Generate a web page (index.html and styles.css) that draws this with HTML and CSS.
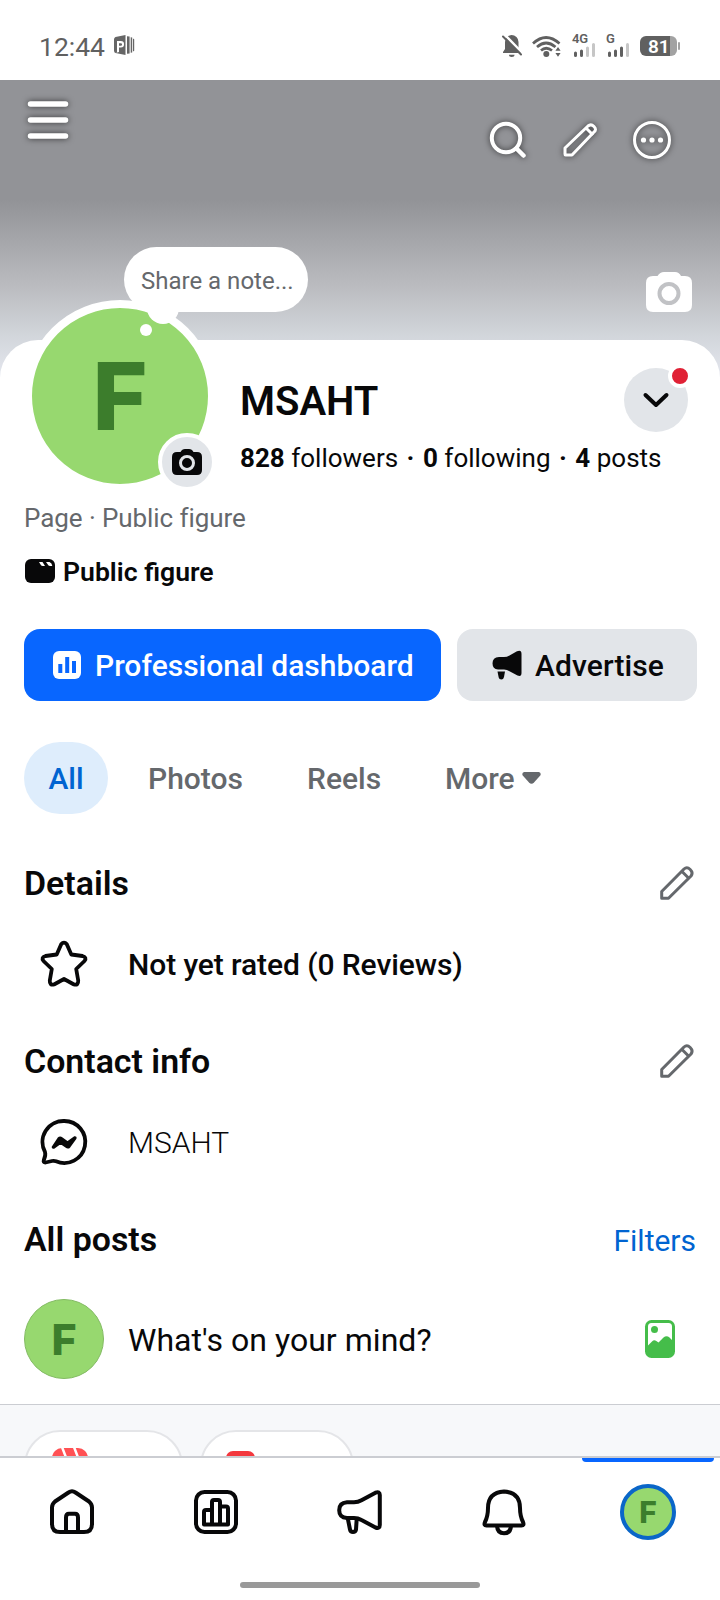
FILE: index.html
```html
<!DOCTYPE html>
<html lang="en">
<head>
<meta charset="utf-8">
<title>MSAHT</title>
<link rel="stylesheet" href="styles.css">
</head>
<body>
<header class="status">
  <span class="clock">12:44</span>
  <svg class="ppt" width="22" height="22" viewBox="0 0 22 22"><path fill="#666" fill-rule="evenodd" d="M2.500 2L12.500 0V20L2.500 18H4L4 6H7.800a3.200 3.200 0 1 1 0 6.500H6V17L2.500 18Q1 17.500 1 15.500V4.500Q1 2.500 2.500 2ZM6 8.300V10.800H7.800a1.200 1.200 0 0 0 0-2.500Z"/><path fill="#666" d="M14 1.200l2.600.4v16.800l-2.600.4zM17.700 2.200l1.500.3v15l-1.500.3zM20 3.500l1.200.8v11.500l-1.200.8z"/></svg>
  <div class="status-icons">
    <svg class="bell-off" width="20" height="24" viewBox="0 0 20 24"><path fill="#606060" d="M9.500 1a7 7 0 0 1 7 7v6l2.500 4v1H1v-1l2-3V8a7 7 0 0 1 6.500-7ZM7 20.800h5.500a2.700 2.200 0 0 1-5.500 0z"/><path stroke="#fff" stroke-width="2.500" d="M2.500 0.500L21 19.500"/><path stroke="#606060" stroke-width="2" stroke-linecap="round" d="M1 2.500L19 20.500"/></svg>
    <svg class="wifi" width="29" height="24" viewBox="0 0 29 24"><g fill="none" stroke="#606060" stroke-width="2.700"><path d="M1 9.500Q14 -2.500 27.500 9.500"/><path d="M5 13Q14 5 23.500 13"/><path d="M9 16.500Q14 12 20 16.500"/></g><circle cx="14.300" cy="20" r="3" fill="#606060"/><path fill="#606060" d="M26 13l2.600 3.800h-5.200zM26 22.700l2.600-3.800h-5.200z"/></svg>
    <div class="signal"><span>4G</span><svg width="24" height="14" viewBox="0 0 24 14"><g stroke="#606060" stroke-width="3" stroke-linecap="round"><path d="M3.500 10v2.500M9.500 8v4.500"/><path stroke="#c6c6c6" d="M15.500 5v7.500M21.500 1.500v11"/></g></svg></div>
    <div class="signal"><span>G</span><svg width="24" height="14" viewBox="0 0 24 14"><g stroke="#606060" stroke-width="3" stroke-linecap="round"><path d="M3.500 10v2.500M9.500 8v4.500M15.500 5v7.500"/><path stroke="#c6c6c6" d="M21.500 1.500v11"/></g></svg></div>
    <div class="battery">81</div>
  </div>
</header>

<section class="cover">
  <svg class="menu glow" width="42" height="42" viewBox="0 0 42 42"><path stroke="#fff" stroke-width="5.500" stroke-linecap="round" d="M3.500 5h35M3.500 21h35M3.500 37h35"/></svg>
  <div class="cover-actions">
    <svg class="glow search" width="38" height="38" viewBox="0 0 38 38" fill="none" stroke="#fff" stroke-linecap="round"><circle cx="17" cy="17" r="14.200" stroke-width="4"/><path stroke-width="4.500" d="M27.500 27.500l7 7"/></svg>
    <svg class="glow" width="36" height="36" viewBox="0 0 36 36" fill="none" stroke="#fff" stroke-width="3" stroke-linejoin="round"><path d="M3 26L26 4Q29 1.500 32 4.500Q35 7.500 32 10L10 33H3.500Q3 33 3 32Z"/><path d="M24 6l7 7"/></svg>
    <svg class="glow" width="40" height="40" viewBox="0 0 40 40"><circle cx="20" cy="20" r="17.500" fill="none" stroke="#fff" stroke-width="3"/><g fill="#fff"><circle cx="11.500" cy="20" r="2.600"/><circle cx="20" cy="20" r="2.600"/><circle cx="28.500" cy="20" r="2.600"/></g></svg>
  </div>
  <svg class="cover-camera" width="46" height="40" viewBox="0 0 46 40"><path fill="#fff" d="M7 4h4.500Q14 0 18 0h11q4 0 6 4h4q7 0 7 7v22q0 7-7 7H7q-7 0-7-7V11q0-7 7-7Z"/><circle cx="23" cy="21.500" r="9.500" fill="none" stroke="#c1c2c5" stroke-width="4"/></svg>
</section>

<main class="sheet">
  <section class="profile">
    <div class="avatar"><span class="f f-big">F</span>
      <div class="badge"><svg width="30" height="26" viewBox="0 0 30 26"><path fill="#080809" d="M5 3h3.500Q10 0 13 0h4q3 0 4.500 3H25q5 0 5 5v13q0 5-5 5H5q-5 0-5-5V8q0-5 5-5Z"/><circle cx="15" cy="14" r="6.500" fill="none" stroke="#e2e5e9" stroke-width="3"/></svg></div>
    </div>
    <div class="note">Share a note...<i class="tail"></i><i class="dot"></i></div>
    <div class="identity">
      <div class="name-row"><h1>MSAHT</h1>
        <button class="switch"><svg width="26" height="16" viewBox="0 0 26 16"><path fill="none" stroke="#080809" stroke-width="4" stroke-linecap="round" stroke-linejoin="round" d="M2.500 3L13 13L23.500 3"/></svg><i></i></button>
      </div>
      <p class="stats"><b>828</b> followers<em>·</em><b>0</b> following<em>·</em><b>4</b> posts</p>
    </div>
  </section>
  <p class="kind">Page · Public figure</p>
  <p class="category"><svg width="30" height="24" viewBox="0 0 30 24"><rect width="30" height="24" rx="6" fill="#080809"/><path fill="#fff" d="M14 3h3.500l2.500 4h-2.200Q16.500 7 16 6.200ZM21 3h3.500Q27 4 27.300 7h-2.200q-1.300 0-1.800-.8Z"/></svg><span>Public figure</span></p>
  <div class="buttons">
    <button class="btn primary"><svg width="28" height="28" viewBox="0 0 28 28"><rect width="28" height="28" rx="6" fill="#fff"/><path fill="#0866ff" d="M5.300 13h4v9h-4zM12.200 6h4v16h-4zM19 10h4v12h-4z"/></svg><span>Professional dashboard</span></button>
    <button class="btn secondary"><svg width="30" height="30" viewBox="0 0 30 30"><path fill="#080809" d="M7 7H12Q15 7 17.500 5.500L25 1.300Q29.500-.500 29.500 4v19q0 4-4 2.500L17.500 21.300Q15 19.500 12 19.500H6Q.5 19 .5 13.200T7 7ZM5.500 21.500h7.500l-1 5.500Q11.500 29.500 9.300 29.500T6.700 27.500Z"/></svg><span class="t-adv">Advertise</span></button>
  </div>
  <nav class="tabs">
    <a class="on">All</a><a class="t-photos">Photos</a><a class="t-reels">Reels</a><a class="t-more">More<svg width="19" height="12" viewBox="0 0 19 12"><path fill="#65686c" d="M2 0h15q2 .5 1.700 3L12 10.500q-2.500 2.400-5 0L.3 3Q0 .5 2 0Z"/></svg></a>
  </nav>
  <div class="heading"><h2>Details</h2><svg class="pencil" width="34" height="34" viewBox="0 0 34 34"><path d="M1.700 25.500L24 3Q27 .300 30.200 3.500T31 10L8.500 32.200H1.700Z"/><path d="M22 5.500L28.500 12"/></svg></div>
  <div class="row"><svg width="48" height="48" viewBox="0 0 48 48"><path fill="none" stroke="#080809" stroke-width="3.800" stroke-linejoin="round" d="M21.200 4.300Q24 .8 26.800 4.300L31.300 14.500L42.500 16Q47.200 17.300 44.500 21L36.200 29L38.200 40.500Q38.500 45.500 34 44.500L24 39L14 44.500Q9.500 45.500 9.800 40.500L11.800 29L3.500 21Q.8 17.300 5.500 16L16.700 14.500Z"/></svg><span class="t-rated">Not yet rated (0 Reviews)</span></div>
  <div class="heading"><h2>Contact info</h2><svg class="pencil" width="34" height="34" viewBox="0 0 34 34"><path d="M1.700 25.500L24 3Q27 .300 30.200 3.500T31 10L8.500 32.200H1.700Z"/><path d="M22 5.500L28.500 12"/></svg></div>
  <div class="row"><svg width="48" height="48" viewBox="0 0 48 48"><path fill="none" stroke="#080809" stroke-width="3.800" stroke-linejoin="round" d="M24 3a21 21 0 1 1-8 40.300Q14 42.500 12 43L5.500 44.500Q3 44.500 3.800 42Q6 37 5 34A21 21 0 0 1 24 3Z"/><path fill="#080809" stroke="#080809" stroke-width="2" stroke-linejoin="round" d="M12.700 29L18.500 20.300Q20 18.700 22 20.200L27.500 24.200L34.500 19.300Q36 19 35.500 20.500L29.500 28.700Q28 30.300 26 28.800L20.500 25L14 29.700Q12.700 30 12.700 29Z"/></svg><span class="light">MSAHT</span></div>
  <div class="heading"><h2>All posts</h2><a class="filters">Filters</a></div>
  <div class="composer">
    <div class="avatar-sm"><span class="f f-mid">F</span></div><span class="prompt">What's on your mind?</span>
    <svg width="30" height="38" viewBox="0 0 30 38"><rect width="30" height="38" rx="6.500" fill="#45bd4a"/><path fill="#fff" d="M3 6.500Q3 3 6.500 3h17Q27 3 27 6.500V20L24.500 17.500Q21.500 14.800 18.500 17.500L13.500 22.500L11.300 21Q9 19.500 7 21.500L3 25.500Z"/><circle cx="9.500" cy="9.500" r="3.500" fill="#45bd4a"/></svg>
  </div>
  <div class="chips">
    <div class="chip reel"><svg width="36" height="36" viewBox="0 0 36 36"><rect width="36" height="36" rx="10" fill="#ff5154"/><path stroke="#fff" stroke-width="2.500" d="M10 -1L15 12M22 -1L27 12"/></svg><span>Reel</span></div>
    <div class="chip live"><svg width="29" height="29" viewBox="0 0 29 29"><rect width="29" height="29" rx="7" fill="#f3383e"/></svg></div>
  </div>
</main>

<footer class="bottom">
  <nav>
    <a><svg width="48" height="48" viewBox="0 0 48 48"><path d="M20.500 4.500Q24 2 27.500 4.500L41 13.500Q44 16 44 19.500V36Q44 44 36 44H12Q4 44 4 36V19.500Q4 16 7 13.500Z"/><path d="M18 44V29.500Q18 25.700 21 25.700H27Q30 25.700 30 29.500V44"/></svg></a>
    <a><svg width="48" height="48" viewBox="0 0 48 48"><rect x="4" y="4" width="40" height="40" rx="8.500"/><path d="M20 36.500H12V24Q12 22 14 22H20V14Q20 12 22 12H26Q28 12 28 14V18.500H34Q36 18.500 36 20.500V36.500ZM20 22V36.500M28 18.500V36.500"/></svg></a>
    <a><svg width="48" height="48" viewBox="0 0 48 48"><path d="M11 14.300H18Q22 14.300 25.500 12.300L39.500 4.700Q43.800 3 43.800 7V37Q43.800 41 39.500 39.500L25.500 32Q22 30 18 30H11Q3.200 29.500 3.200 22.200T11 14.300Z"/><path d="M11.800 30.500L14 41.500Q14.500 44 17 44T20 41.500L20.700 31"/></svg></a>
    <a><svg width="48" height="48" viewBox="0 0 48 48"><path d="M24 3.500Q40 4.500 40 20Q40 28 43 34Q44.500 37.500 41.500 37.500H6.500Q3.500 37.500 5 34Q8 28 8 20Q8 4.500 24 3.500Z"/><path d="M17 38Q17.500 45.300 24 45.300T31 38"/></svg></a>
    <a class="current"><div class="avatar-xs"><span class="f f-small">F</span></div></a>
  </nav>
  <div class="home-bar"></div>
</footer>
</body>
</html>
```

FILE: styles.css
```css
* { box-sizing: border-box; }
body { margin: 0; width: 720px; height: 1600px; overflow: hidden; background: #fff; color: #080809; font-family: Roboto, sans-serif; display: flex; flex-direction: column; }
h1, h2, p { margin: 0; }
button { border: 0; padding: 0; font: inherit; color: inherit; }
svg { display: block; flex: none; overflow: visible; }
span, a, h1, h2, p { white-space: nowrap; }

.status { height: 80px; flex: none; display: flex; align-items: center; padding: 12px 40px 0 39px; color: #606060; }
.clock { font-size: 26.500px; width: 74px; padding-top: 1px; }
.ppt { margin-top: -1px; }
.status-icons { margin-left: auto; display: flex; align-items: center; }
.bell-off { margin-right: 10px; }
.wifi { margin-right: 11px; }
.signal { height: 24px; width: 24px; margin-right: 10px; display: flex; flex-direction: column; }
.signal span { font-size: 13px; line-height: 10px; height: 9px; font-weight: 600; letter-spacing: -.3px; }
.battery { position: relative; width: 37px; height: 20px; border-radius: 6px; background: linear-gradient(90deg, #606060 30px, #a2a2a2 30px); color: #fff; font-size: 19px; line-height: 21px; font-weight: 600; padding-left: 8px; margin-right: 3px; }
.battery::after { content: ""; position: absolute; left: 38px; top: 6px; width: 2px; height: 8px; border-radius: 1px; background: #a2a2a2; }

.cover { height: 300px; flex: none; position: relative; display: flex; justify-content: space-between; align-items: flex-start; padding: 19px 48px 0 27px; background: linear-gradient(#929397 0, #929397 120px, #bbbcc0 207px, #d2d6db 256px, #e6e8f0 300px); }
.glow { filter: drop-shadow(0 0 3px rgba(0,0,0,.65)); }
.cover-actions { display: flex; align-items: center; gap: 34px; padding-top: 21px; }
.search { margin-right: 1px; }
.cover-camera { position: absolute; left: 646px; top: 192px; }

.sheet { flex: none; height: 1116px; margin-top: -40px; background: #fff; border-radius: 38px 38px 0 0; position: relative; display: flex; flex-direction: column; }
.profile { height: 160px; flex: none; position: relative; padding: 28px 0 0 240px; }
.avatar { position: absolute; left: 24px; top: -40px; width: 192px; height: 192px; border: 8px solid #fff; border-radius: 50%; background: #97d86f; }
.f { font-family: Inter, sans-serif; font-weight: 800; color: #3c7d2c; line-height: 1; }
.avatar, .avatar-sm, .avatar-xs { display: flex; align-items: center; justify-content: center; }
.f-big { font-size: 94px; }
.f-mid { font-size: 43px; }
.f-small { font-size: 30px; }
.badge { position: absolute; left: 126px; top: 125px; width: 58px; height: 58px; border: 4px solid #fff; border-radius: 50%; background: #e2e5e9; display: flex; align-items: center; justify-content: center; }
.note { position: absolute; left: 124px; top: -93px; width: 184px; height: 65px; border-radius: 33px; background: #fff; color: #65686c; font-size: 24px; line-height: 69px; padding-left: 17px; white-space: nowrap; }
.tail, .dot { position: absolute; border-radius: 50%; background: #fff; }
.tail { left: 23px; top: 45px; width: 32px; height: 32px; }
.dot { left: 16px; top: 77px; width: 12px; height: 12px; }
.name-row { height: 64px; display: flex; align-items: center; justify-content: space-between; padding-right: 32px; }
h1 { font-size: 40px; font-weight: 600; line-height: 64px; padding-top: 4px; }
.switch { width: 64px; height: 64px; border-radius: 50%; background: #e2e5e9; position: relative; display: flex; align-items: center; justify-content: center; }
.switch i { position: absolute; left: 44px; top: -4px; width: 24px; height: 24px; border-radius: 50%; border: 4px solid #fff; background: #e02135; }
.stats { font-size: 26px; line-height: 52px; }
.stats b { font-weight: 700; }
.stats em { font-style: normal; font-weight: 700; margin: 0 8.500px; }
.kind { height: 36px; line-height: 36px; padding-left: 24px; font-size: 26px; letter-spacing: -.07px; color: #65686c; }
.category { height: 38px; margin: 16px 0 39px; display: flex; align-items: center; gap: 8px; padding-left: 25px; font-size: 26.600px; font-weight: 600; }
.buttons { display: flex; gap: 16px; padding: 0 23px 0 24px; }
.btn { height: 72px; border-radius: 16px; display: flex; align-items: center; font-size: 30px; font-weight: 500; }
.primary { width: 417px; background: #0866ff; color: #fff; padding-left: 29px; gap: 14px; }
.secondary { width: 240px; background: #e2e5e9; padding-left: 35px; gap: 13px; }
.t-adv { letter-spacing: .1px; }
.tabs { height: 72px; flex: none; margin: 41px 0 49px 24px; display: flex; align-items: center; font-size: 30px; font-weight: 500; color: #65686c; }
.tabs .on { width: 84px; height: 72px; line-height: 74px; border-radius: 36px; background: #deedfc; color: #0064d1; text-align: center; }
.t-photos { margin-left: 40px; width: 159px; }
.t-reels { width: 138px; }
.t-more { display: flex; align-items: center; gap: 7px; }
.heading { height: 40px; flex: none; display: flex; align-items: center; justify-content: space-between; padding: 0 26px 0 24px; }
h2 { font-size: 33.900px; font-weight: 600; line-height: 40px; padding-top: 2px; }
.pencil { fill: none; stroke: #65686c; stroke-width: 3; stroke-linejoin: round; }
.row { height: 64px; flex: none; margin: 29px 0 45px; padding-left: 40px; display: flex; align-items: center; gap: 40px; font-size: 30px; font-weight: 500; }
.t-rated { letter-spacing: -.09px; }
.light { font-weight: 300; }
.filters { font-size: 30px; color: #0064d1; margin-right: -2px; padding-top: 2px; }
.composer { height: 130px; flex: none; display: flex; align-items: center; gap: 24px; margin-top: 15px; padding: 0 45px 0 24px; }
.composer > svg { margin-left: auto; }
.avatar-sm { width: 80px; height: 80px; border-radius: 50%; border: 1px solid #83bb63; background: #97d86f; }
.prompt { font-size: 32px; letter-spacing: .04px; padding-top: 2px; }
.chips { flex: 1; min-height: 0; overflow: hidden; border-top: 1px solid #cbcdd2; background: #f7f8fa; display: flex; gap: 17px; padding: 25px 0 0 24px; }
.chip { height: 72px; flex: none; border: 2px solid #e4e5e8; border-radius: 36px; background: #fff; display: flex; align-items: flex-start; gap: 15px; padding-top: 16px; }
.chip span { line-height: 38px; font-size: 26px; }
.reel { width: 159px; padding-left: 26px; }
.live { width: 154px; padding-left: 24px; padding-top: 19px; }

.bottom { height: 144px; flex: none; border-top: 2px solid #cbcdd2; background: #fff; position: relative; }
.bottom nav { height: 108px; display: grid; grid-template-columns: repeat(5, 144px); }
.bottom a { display: flex; align-items: center; justify-content: center; position: relative; }
.bottom svg { fill: none; stroke: #080809; stroke-width: 4; stroke-linejoin: round; }
.current::before { content: ""; position: absolute; left: 6px; top: 0; width: 132px; height: 4px; background: #0866ff; border-radius: 0 0 4px 4px; }
.avatar-xs { width: 56px; height: 56px; border-radius: 50%; border: 4px solid #0a66c8; background: #97d86f; }
.home-bar { width: 240px; height: 6px; margin: 16px auto 0; border-radius: 3px; background: #999; }
```
